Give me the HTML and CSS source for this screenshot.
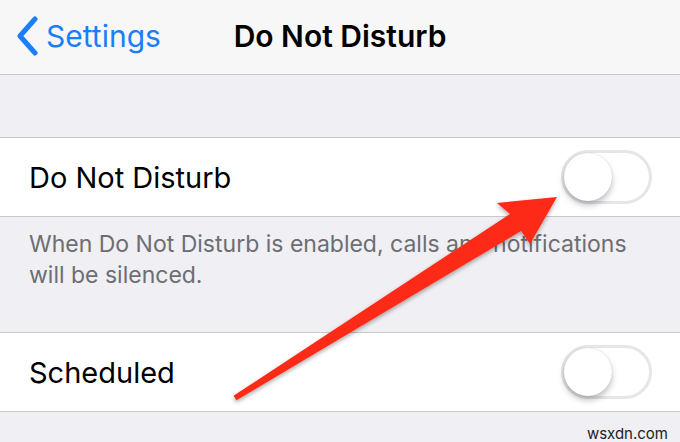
FILE: index.html
```html
<!DOCTYPE html>
<html lang="en">
  <head>
    <meta charset="UTF-8" />
    <meta name="viewport" content="width=device-width, initial-scale=1.0" />
    <title>Do Not Disturb</title>
    <link rel="stylesheet" href="styles.css">
  </head>
  <body>
    <div id="screen">
      <header class="navbar">
        <a class="back" href="#">
          <svg class="chevron" width="24" height="40" viewBox="0 0 24 40">
            <path d="M20 3 L5 20 L20 37" fill="none" stroke="#1a7ff7" stroke-width="5" stroke-linecap="round" stroke-linejoin="round" />
          </svg>
          <span>Settings</span>
        </a>
        <h1 class="title">Do Not Disturb</h1>
        <div></div>
      </header>

      <div class="spacer"></div>

      <div class="group">
        <div class="row">
          <span class="label">Do Not Disturb</span>
          <span class="switch"><span class="knob"></span></span>
        </div>
      </div>
      <p class="footnote">
        When Do Not Disturb is enabled, calls and notifications
        will be silenced.
      </p>

      <div class="group">
        <div class="row">
          <span class="label">Scheduled</span>
          <span class="switch"><span class="knob"></span></span>
        </div>
      </div>

      <div class="bottom">
        <span class="mark">wsxdn.com</span>
      </div>

      <!-- pointer drawn on top of the list -->
      <svg class="pointer" width="680" height="442" viewBox="0 0 680 442">
        <defs>
          <filter id="shade" x="-10%" y="-10%" width="120%" height="130%">
            <feDropShadow dx="0" dy="2" stdDeviation="2" flood-color="#000" flood-opacity="0.35" />
          </filter>
        </defs>
        <polygon
          points="557,197 530,244 521,231 236.5,400.2 233.5,395.8 510,214 497,203"
          fill="#fc2a17"
          filter="url(#shade)"
        />
      </svg>
    </div>
  </body>
</html>
```

FILE: styles.css
```css
* {
  box-sizing: border-box;
}

body {
  margin: 0;
  font-family: Inter, "Liberation Sans", sans-serif;
  background-color: #efeff4;
  color: #000;
}

#screen {
  position: relative;
  width: 680px;
  height: 442px;
  overflow: hidden;
}

/* Navigation bar */
.navbar {
  display: grid;
  grid-template-columns: 1fr auto 1fr;
  align-items: center;
  height: 75px;
  padding-bottom: 2px;
  background-color: #f7f7f8;
  border-bottom: 1px solid #c8c7cc;
}

.back {
  display: flex;
  align-items: center;
  gap: 7px;
  padding-left: 15px;
  color: #1a7ff7;
  font-size: 30px;
  text-decoration: none;
}

.title {
  margin: 0;
  font-size: 30px;
  font-weight: 600;
}

.spacer {
  height: 62px;
}

/* Table rows */
.group {
  background-color: #fff;
  border-top: 1px solid #c8c7cc;
  border-bottom: 1px solid #c8c7cc;
}

.row {
  display: flex;
  align-items: center;
  justify-content: space-between;
  height: 78px;
  padding: 0 28px 0 29px;
}

.label {
  font-size: 29px;
}

.switch {
  position: relative;
  width: 91px;
  height: 54px;
  border: 3px solid #e5e5ea;
  border-radius: 27px;
  background-color: #fff;
}

.knob {
  position: absolute;
  top: 0;
  left: 0;
  width: 48px;
  height: 48px;
  border-radius: 50%;
  background-color: #fff;
  box-shadow: 0 4px 6px rgba(0, 0, 0, 0.25), 0 0 1px rgba(0, 0, 0, 0.2);
}

.footnote {
  height: 115px;
  margin: 0;
  padding: 12px 40px 0 29px;
  font-size: 23px;
  line-height: 31px;
  color: #6d6d72;
}

.bottom {
  display: flex;
  justify-content: flex-end;
  padding: 12px 12px 0 0;
}

.mark {
  font-size: 15px;
  color: #222;
}

.pointer {
  position: absolute;
  top: 0;
  left: 0;
}
```
